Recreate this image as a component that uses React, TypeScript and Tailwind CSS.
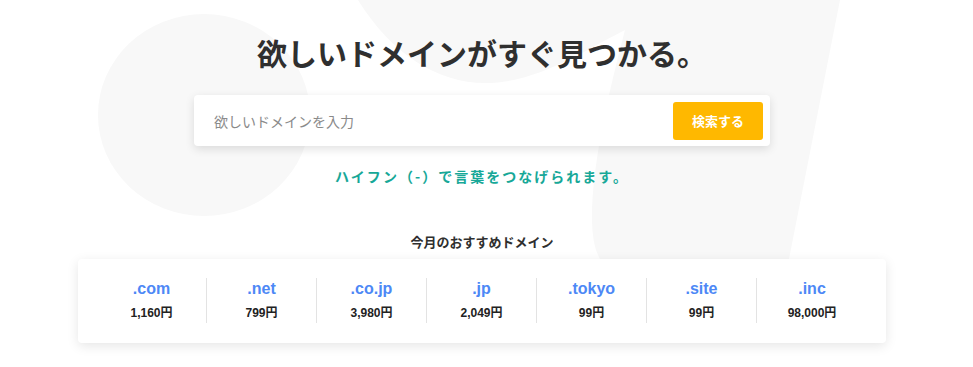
const domains = [
  { name: '.com', price: '1,160' },
  { name: '.net', price: '799' },
  { name: '.co.jp', price: '3,980' },
  { name: '.jp', price: '2,049' },
  { name: '.tokyo', price: '99' },
  { name: '.site', price: '99' },
  { name: '.inc', price: '98,000' },
]

const jp = "font-['Noto_Sans_CJK_JP',sans-serif]"

const HeroBackground = () => (
  <div className="absolute left-0 top-0 h-[259px] w-full overflow-hidden">
    <svg width="973" height="259" viewBox="0 0 973 259" className="block">
      <ellipse cx="204" cy="115" rx="106" ry="101" fill="#f8f8f8" />
      <path
        d="M358 0 C392 55 440 85 490 83 C540 81 585 50 625 30 C612 80 592 160 592 217 C592 238 595 250 600 259 L789 259 L840 0 Z"
        fill="#f8f8f8"
      />
    </svg>
  </div>
)

const App = () => {
  return (
    <div className="relative h-[367px] w-full overflow-hidden bg-white">
      <HeroBackground />

      <div className="relative flex flex-col items-center pr-[9px]">
        <h1 className={`mt-[32px] text-[30px] font-bold leading-[40px] text-[#2f2f2f] ${jp}`}>
          欲しいドメインがすぐ見つかる。
        </h1>

        {/* search */}
        <div className="mt-[23px] flex h-[51px] w-[576px] items-center rounded-[4px] bg-white pl-[20px] pr-[7px] shadow-[0_3px_10px_rgba(0,0,0,0.12)]">
          <input
            type="text"
            placeholder="欲しいドメインを入力"
            className={`h-full flex-1 bg-transparent text-[14px] text-[#333] outline-none placeholder:text-[#8a8a8a] ${jp}`}
          />
          <button
            className={`h-[38px] w-[90px] rounded-[3px] bg-[#ffb800] text-[13px] font-bold text-white ${jp}`}
          >
            検索する
          </button>
        </div>

        <p className={`mt-[20px] text-[14px] font-semibold leading-[20px] tracking-[2px] text-[#17a898] ${jp}`}>
          ハイフン（-）で言葉をつなげられます。
        </p>

        <p className={`mt-[46px] text-[13px] font-semibold leading-[20px] text-[#2f2f2f] ${jp}`}>
          今月のおすすめドメイン
        </p>

        {/* recommended domains */}
        <div className="mt-[7px] flex w-[808px] rounded-[4px] bg-white px-[19px] pb-[20px] pt-[19px] shadow-[0_3px_12px_rgba(0,0,0,0.1)]">
          {domains.map((d, i) => (
            <div
              key={d.name}
              className={`flex h-[45px] w-[110px] flex-col items-center ${i < domains.length - 1 ? 'border-r border-[#e3e3e3]' : ''}`}
            >
              <span className="font-['Liberation_Sans',sans-serif] text-[16px] font-bold leading-[22px] text-[#4d88f6]">
                {d.name}
              </span>
              <span className="mt-[4px] font-['Liberation_Sans','Noto_Sans_CJK_JP',sans-serif] text-[12px] font-bold leading-[18px] text-[#222]">
                {d.price}円
              </span>
            </div>
          ))}
        </div>
      </div>
    </div>
  )
}

export default App
